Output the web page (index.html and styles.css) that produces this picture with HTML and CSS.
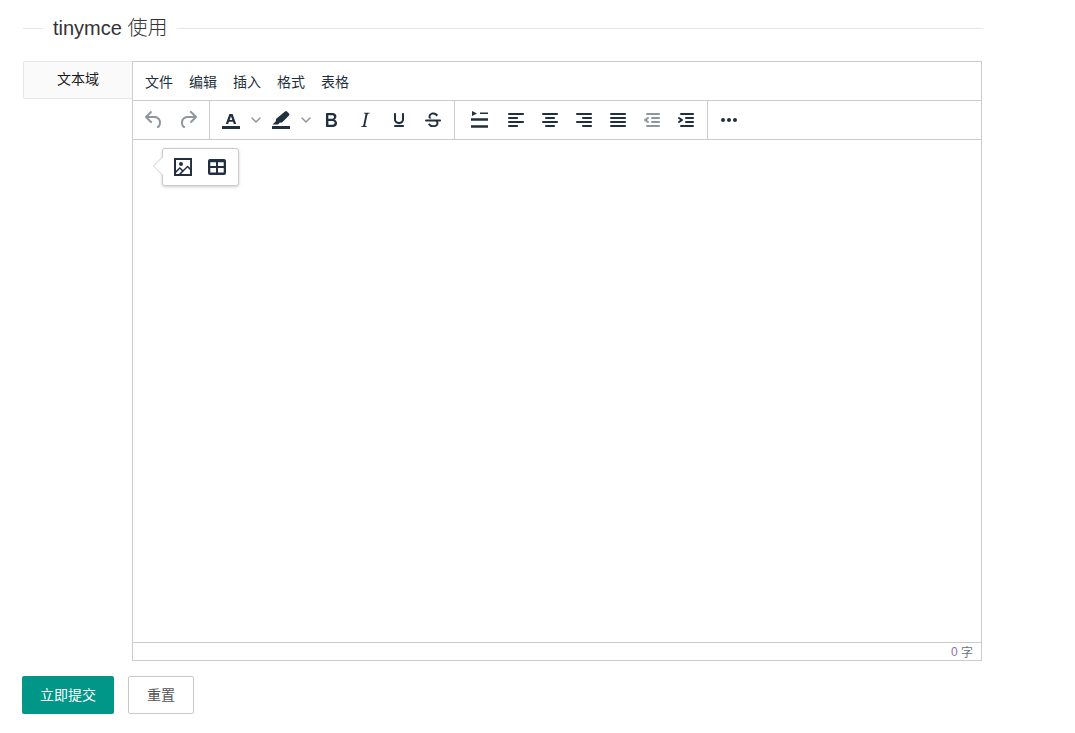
FILE: index.html
```html
<!DOCTYPE html>
<html lang="zh">
<head>
<meta charset="utf-8">
<title>tinymce 使用</title>
<link rel="stylesheet" href="styles.css">
</head>
<body>
<div class="page">
  <fieldset class="title-field"><legend>tinymce 使用</legend></fieldset>
  <div class="form-row">
    <div class="form-label">文本域</div>
    <div class="editor">
      <div class="menubar">
        <span class="menu-item">文件</span><span class="menu-item">编辑</span><span class="menu-item">插入</span><span class="menu-item">格式</span><span class="menu-item">表格</span>
      </div>
      <div class="toolbar">
        <div class="group">
          <span class="btn off"><svg viewBox="0 0 24 24"><path d="M6.4 8H12c3.7 0 6.2 2 6.8 5.1.6 2.7-.4 5.6-2.3 6.8a1 1 0 0 1-1-1.8c1.1-.6 1.8-2.7 1.4-4.6-.5-2.1-2.1-3.5-4.9-3.5H6.4l3.3 3.3a1 1 0 1 1-1.4 1.4l-5-5a1 1 0 0 1 0-1.4l5-5a1 1 0 0 1 1.4 1.4L6.4 8z"/></svg></span>
          <span class="btn off"><svg viewBox="0 0 24 24"><path d="M17.6 10H12c-2.8 0-4.4 1.4-4.9 3.5-.4 2 .3 4 1.4 4.6a1 1 0 1 1-1 1.8c-2-1.2-2.9-4.1-2.3-6.8.6-3 3-5.1 6.8-5.1h5.6l-3.3-3.3a1 1 0 1 1 1.4-1.4l5 5a1 1 0 0 1 0 1.4l-5 5a1 1 0 0 1-1.4-1.4l3.3-3.3z"/></svg></span>
        </div>
        <div class="group">
          <span class="btn"><svg viewBox="0 0 24 24"><path d="M3 18h18v3H3z"/><path fill-rule="evenodd" d="M10.400 6h3.200L17.200 16h-2.400l-.7-2.200H9.900L9.200 16H6.800l3.600-10zm.3 5.900h2.600L12 8.200l-1.300 3.700z"/></svg></span>
          <span class="chev"><svg viewBox="0 0 10 10"><path d="M1 3l4 4 4-4" fill="none" stroke="#222f3e" stroke-width="1.500" stroke-linecap="round" stroke-linejoin="round"/></svg></span>
          <span class="btn"><svg viewBox="0 0 24 24"><path d="M3 18h18v3H3z"/><path d="M16 3.500a1.500 1.500 0 0 1 2 0l2 2a1.500 1.500 0 0 1 0 2L13.500 14c-.7.7-1.800.8-2.500.5L9 16.500H3.500L7 13c-.3-.8-.1-1.800.5-2.500L16 3.500z"/></svg></span>
          <span class="chev"><svg viewBox="0 0 10 10"><path d="M1 3l4 4 4-4" fill="none" stroke="#222f3e" stroke-width="1.500" stroke-linecap="round" stroke-linejoin="round"/></svg></span>
          <span class="btn"><svg viewBox="0 0 24 24"><path d="M7.800 19c-.3 0-.5 0-.6-.2l-.2-.5V5.700c0-.2 0-.4.2-.5l.6-.2h5c1.500 0 2.700.3 3.500 1 .7.600 1.100 1.400 1.100 2.500a3 3 0 0 1-.6 1.900c-.4.600-1 1-1.600 1.200.4.100.9.300 1.300.6s.8.700 1 1.200c.4.400.5 1 .5 1.600 0 1.300-.4 2.300-1.300 3-.8.700-2.100 1-3.800 1H7.800zm5-8.300c.6 0 1.200-.1 1.600-.5.400-.3.600-.7.600-1.300 0-1.100-.8-1.700-2.300-1.700H9.300v3.500h3.500zm.5 6c.7 0 1.300-.1 1.700-.4.400-.4.600-.9.600-1.500s-.2-1-.7-1.400c-.4-.3-1-.4-2-.4H9.400v3.700h3.900z"/></svg></span>
          <span class="btn"><svg viewBox="0 0 24 24"><path d="M16.700 4.700l-.1.900h-.3c-.6 0-1 0-1.400.3-.3.300-.4.600-.5 1.100l-2.100 9.800v.6c0 .5.400.8 1.400.8h.2l-.2.8H8l.2-.8h.2c1.100 0 1.800-.5 2-1.500l2-9.800.1-.5c0-.6-.4-.8-1.400-.8h-.3l.2-.9h5.400z"/></svg></span>
          <span class="btn"><svg viewBox="0 0 24 24"><path d="M16 5c.6 0 1 .4 1 1v5.500a4 4 0 0 1-.4 1.800l-1 1.400a5.300 5.300 0 0 1-5.500 1 5 5 0 0 1-1.600-1c-.5-.4-.8-.9-1.100-1.400a4 4 0 0 1-.4-1.800V6c0-.6.400-1 1-1s1 .4 1 1v5.500c0 .3 0 .6.200 1l.6.700a3.300 3.300 0 0 0 2.200.8 3.400 3.400 0 0 0 2.200-.8c.3-.2.400-.5.600-.8l.2-.9V6c0-.6.400-1 1-1zM8 17h8c.6 0 1 .4 1 1s-.4 1-1 1H8a1 1 0 0 1 0-2z"/></svg></span>
          <span class="btn"><svg viewBox="0 0 24 24"><path d="M15.600 8.500c-.5-.7-1-1.100-1.300-1.300-.6-.4-1.300-.6-2-.6-2.700 0-2.800 1.700-2.800 2.100 0 .9.500 1.400 1.200 1.800h-2.700a3.300 3.300 0 0 1-.4-1.800c0-.5.100-1.600 1-2.600.8-.9 2.100-1.500 3.800-1.500 1.200 0 2.200.3 3.100 1 .5.300 1 .8 1.500 1.500l-1.400 1.400zM5 11.500h14c.6 0 1 .4 1 1s-.4 1-1 1h-2.100c.3.500.5 1.100.5 1.700 0 1.400-.7 3.900-5 3.900A6.200 6.200 0 0 1 7 16.400l1.500-1.100c.4.600 1.600 2 3.700 2 1.600 0 2.500-.4 3-1 .3-.4.300-.9.300-1.200 0-.6-.2-1.100-.9-1.600H5a1 1 0 0 1 0-2z"/></svg></span>
        </div>
        <div class="group">
          <span class="btn wide"><svg viewBox="0 0 24 24"><path d="M5 3l5 2.500L5 8z"/><path d="M13 4.500h8V6h-8z"/><path d="M4 10.300h17v2.400H4zM4 17.300h17v2.400H4z"/></svg></span>
          <span class="btn"><svg viewBox="0 0 24 24"><path d="M5 5h14c.6 0 1 .4 1 1s-.4 1-1 1H5a1 1 0 1 1 0-2zm0 4h8c.6 0 1 .4 1 1s-.4 1-1 1H5a1 1 0 1 1 0-2zm0 8h8c.6 0 1 .4 1 1s-.4 1-1 1H5a1 1 0 0 1 0-2zm0-4h14c.6 0 1 .4 1 1s-.4 1-1 1H5a1 1 0 0 1 0-2z"/></svg></span>
          <span class="btn"><svg viewBox="0 0 24 24"><path d="M5 5h14c.6 0 1 .4 1 1s-.4 1-1 1H5a1 1 0 1 1 0-2zm3 4h8c.6 0 1 .4 1 1s-.4 1-1 1H8a1 1 0 1 1 0-2zm0 8h8c.6 0 1 .4 1 1s-.4 1-1 1H8a1 1 0 0 1 0-2zm-3-4h14c.6 0 1 .4 1 1s-.4 1-1 1H5a1 1 0 0 1 0-2z"/></svg></span>
          <span class="btn"><svg viewBox="0 0 24 24"><path d="M5 5h14c.6 0 1 .4 1 1s-.4 1-1 1H5a1 1 0 1 1 0-2zm6 4h8c.6 0 1 .4 1 1s-.4 1-1 1h-8a1 1 0 0 1 0-2zm0 8h8c.6 0 1 .4 1 1s-.4 1-1 1h-8a1 1 0 0 1 0-2zm-6-4h14c.6 0 1 .4 1 1s-.4 1-1 1H5a1 1 0 0 1 0-2z"/></svg></span>
          <span class="btn"><svg viewBox="0 0 24 24"><path d="M5 5h14c.6 0 1 .4 1 1s-.4 1-1 1H5a1 1 0 1 1 0-2zm0 4h14c.6 0 1 .4 1 1s-.4 1-1 1H5a1 1 0 1 1 0-2zm0 4h14c.6 0 1 .4 1 1s-.4 1-1 1H5a1 1 0 0 1 0-2zm0 4h14c.6 0 1 .4 1 1s-.4 1-1 1H5a1 1 0 0 1 0-2z"/></svg></span>
          <span class="btn off"><svg viewBox="0 0 24 24"><path d="M7 5h12c.6 0 1 .4 1 1s-.4 1-1 1H7a1 1 0 1 1 0-2zm5 4h7c.6 0 1 .4 1 1s-.4 1-1 1h-7a1 1 0 0 1 0-2zm0 4h7c.6 0 1 .4 1 1s-.4 1-1 1h-7a1 1 0 0 1 0-2zm-5 4h12a1 1 0 0 1 0 2H7a1 1 0 0 1 0-2zm1.600-3.800a1 1 0 0 1-1.200 1.600l-3-2a1 1 0 0 1 0-1.600l3-2a1 1 0 0 1 1.200 1.600L6.800 12l1.800 1.200z"/></svg></span>
          <span class="btn"><svg viewBox="0 0 24 24"><path d="M7 5h12c.6 0 1 .4 1 1s-.4 1-1 1H7a1 1 0 1 1 0-2zm5 4h7c.6 0 1 .4 1 1s-.4 1-1 1h-7a1 1 0 0 1 0-2zm0 4h7c.6 0 1 .4 1 1s-.4 1-1 1h-7a1 1 0 0 1 0-2zm-5 4h12a1 1 0 0 1 0 2H7a1 1 0 0 1 0-2zm-2.600-3.800L6.200 12l-1.800-1.200a1 1 0 0 1 1.200-1.600l3 2a1 1 0 0 1 0 1.600l-3 2a1 1 0 1 1-1.200-1.600z"/></svg></span>
        </div>
        <div class="group last">
          <span class="btn"><svg viewBox="0 0 24 24"><path d="M6 10a2 2 0 0 0-2 2c0 1.100.9 2 2 2a2 2 0 0 0 2-2 2 2 0 0 0-2-2zm12 0a2 2 0 0 0-2 2c0 1.100.9 2 2 2a2 2 0 0 0 2-2 2 2 0 0 0-2-2zm-6 0a2 2 0 0 0-2 2c0 1.100.9 2 2 2a2 2 0 0 0 2-2 2 2 0 0 0-2-2z"/></svg></span>
        </div>
      </div>
      <div class="edit-area">
        <div class="quick-pop">
          <span class="btn"><svg viewBox="0 0 24 24"><path fill-rule="evenodd" d="M3 3h18v18H3zM5 5v10.700l3.300-3.200c.3-.3.700-.3 1 0L12 15l4.100-4c.3-.4.800-.4 1 0l2 1.900V5H5zm0 13v1h3l2.800-2.900-2-2L5 17.900zm14-3l-2.500-2.400-6.400 6.400H19v-4zM10 7a2 2 0 1 1 0 4 2 2 0 0 1 0-4z"/></svg></span>
          <span class="btn"><svg viewBox="0 0 24 24"><path fill-rule="evenodd" d="M5 4h14a2 2 0 0 1 2 2v12a2 2 0 0 1-2 2H5a2 2 0 0 1-2-2V6a2 2 0 0 1 2-2zM5.300 7.300V11H11V7.300H5.300zm7.700 0V11h5.700V7.300H13zM5.300 13v4.500H11V13H5.300zm7.700 0v4.500h5.700V13H13z"/></svg></span>
        </div>
      </div>
      <div class="statusbar"><span class="count-num">0</span>&nbsp;字</div>
    </div>
  </div>
  <div class="actions">
    <span class="button primary">立即提交</span>
    <span class="button plain">重置</span>
  </div>
</div>
</body>
</html>
```
FILE: styles.css
```css
* { box-sizing: border-box; }
html, body { margin: 0; padding: 0; background: #fff; }
body {
  font-family: "Liberation Sans", "Noto Sans CJK SC", sans-serif;
  font-size: 14px;
  color: #666;
}
.page { padding: 16px 0 0 22px; }

.title-field {
  margin: 0 0 21px 1px;
  padding: 0;
  width: 960px;
  border: 0;
  border-top: 1px solid #e6e6e6;
}
.title-field legend {
  margin-left: 20px;
  padding: 0 10px;
  font-size: 20px;
  line-height: 24px;
  font-weight: 300;
  color: #333;
}

.form-row { display: flex; align-items: flex-start; margin-left: 1px; }
.form-label {
  width: 109px;
  height: 38px;
  line-height: 35px;
  text-align: center;
  color: #1a1a1a;
  background: #fafafa;
  border: 1px solid #e6e6e6;
  border-right: 0;
  border-radius: 2px 0 0 2px;
}

.editor {
  width: 850px;
  height: 600px;
  display: flex;
  flex-direction: column;
  border: 1px solid #ccc;
  color: #222f3e;
}
.menubar {
  height: 39px;
  padding: 2px 4px 0;
  display: flex;
  align-items: center;
  border-bottom: 1px solid #ccc;
}
.menu-item { padding: 0 8px; line-height: 20px; }

.toolbar {
  height: 39px;
  display: flex;
  border-bottom: 1px solid #ccc;
}
.group {
  display: flex;
  align-items: center;
  padding: 0 4px;
  border-right: 1px solid #ccc;
}
.group.last { border-right: 0; }
.btn {
  width: 34px;
  height: 34px;
  display: flex;
  align-items: center;
  justify-content: center;
  flex: none;
}
.btn.wide { width: 40px; }
.btn svg { width: 24px; height: 24px; fill: #222f3e; }
.btn.off svg { opacity: .5; }
.chev {
  width: 16px;
  height: 34px;
  display: flex;
  align-items: center;
  justify-content: center;
  opacity: .5;
  flex: none;
}
.chev svg { width: 10px; height: 10px; }

.edit-area { flex: 1; position: relative; }
.quick-pop {
  position: absolute;
  left: 29px;
  top: 8px;
  display: flex;
  align-items: center;
  height: 38px;
  padding: 0 4px 0 3px;
  background: #fff;
  border: 1px solid #ccc;
  border-radius: 3px;
  box-shadow: 0 1px 3px rgba(0, 0, 0, .2);
}
.quick-pop::before,
.quick-pop::after {
  content: "";
  position: absolute;
  top: 8px;
  border-style: solid;
  border-width: 9px 9px 9px 0;
  border-color: transparent;
}
.quick-pop::before { left: -10px; border-right-color: #ccc; }
.quick-pop::after { left: -9px; border-right-color: #fff; }

.statusbar {
  height: 18px;
  padding: 0 8px;
  display: flex;
  align-items: center;
  justify-content: flex-end;
  font-size: 12px;
  color: rgba(34, 47, 62, .7);
  border-top: 1px solid #ccc;
}
.count-num { color: #8e6fa3; }

.actions { display: flex; gap: 14px; margin-top: 15px; }
.button {
  height: 38px;
  line-height: 36px;
  padding: 0 18px;
  border-radius: 2px;
  border: 1px solid transparent;
  font-size: 14px;
}
.primary { width: 92px; padding: 0; text-align: center; background: #009688; color: #fff; }
.plain { background: #fff; color: #555; border-color: #c9c9c9; }
```
